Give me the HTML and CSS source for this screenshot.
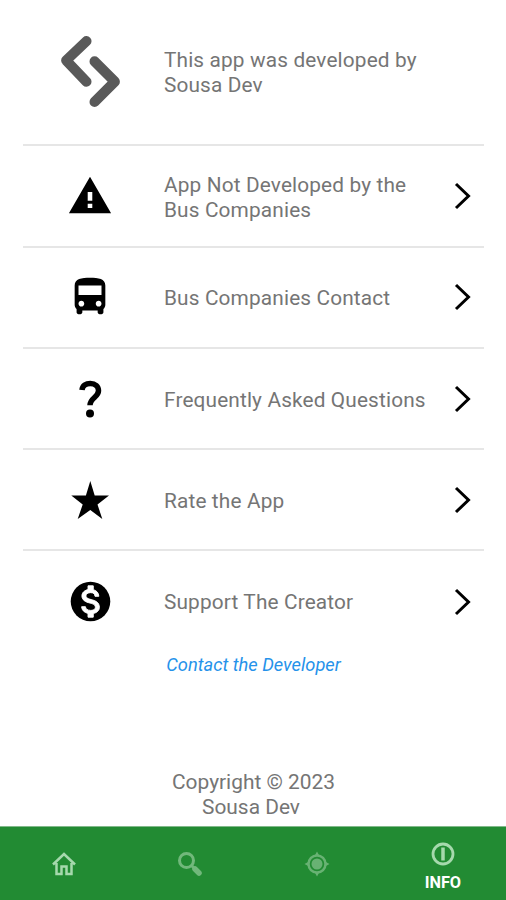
FILE: index.html
```html
<!DOCTYPE html>
<html lang="en">
<head>
<meta charset="utf-8">
<title>Info</title>
<link rel="stylesheet" href="styles.css">
</head>
<body>
<main class="content">
  <section class="row intro">
    <svg class="logo" viewBox="0 0 64 76"><path d="M29 10 9 29 29 50M37 30l20 20-20 20"/></svg>
    <p class="label">This app was developed by<br>Sousa Dev</p>
  </section>
  <a class="row">
    <svg class="icon" viewBox="0 0 24 24"><path d="M1 21h22L12 2 1 21zm12.200-2.700h-2.400v-2.300h2.400v2.300zm0-3.800h-2.400v-4.600h2.400v4.600z"/></svg>
    <p class="label">App Not Developed by the<br>Bus Companies</p>
    <svg class="chevron" viewBox="0 0 18 30"><path d="M2 3 14.500 15 2 27"/></svg>
  </a>
  <a class="row">
    <svg class="icon" viewBox="0 0 24 24"><path d="M4 16c0 .88.39 1.67 1 2.22V20c0 .55.45 1 1 1h1c.55 0 1-.45 1-1v-1h8v1c0 .55.45 1 1 1h1c.55 0 1-.45 1-1v-1.780c.61-.55 1-1.340 1-2.220V6c0-3.500-3.580-4-8-4s-8 .5-8 4v10zm3.500 1c-.83 0-1.500-.67-1.500-1.500S6.670 14 7.500 14s1.500.67 1.500 1.500S8.330 17 7.500 17zm9 0c-.83 0-1.500-.67-1.500-1.500s.67-1.500 1.500-1.500 1.500.67 1.500 1.500-.67 1.500-1.500 1.500zm1.500-6H6V6h12v5z"/></svg>
    <p class="label">Bus Companies Contact</p>
    <svg class="chevron" viewBox="0 0 18 30"><path d="M2 3 14.500 15 2 27"/></svg>
  </a>
  <a class="row">
    <svg class="icon question" viewBox="0 0 46 46"><path d="M15 14C15.500 9.500 19 7.500 23.300 7.500c5 0 8.200 3 8.200 7.300 0 6.500-8.500 7-8.500 14.500"/><circle cx="23" cy="37.500" r="4"/></svg>
    <p class="label">Frequently Asked Questions</p>
    <svg class="chevron" viewBox="0 0 18 30"><path d="M2 3 14.500 15 2 27"/></svg>
  </a>
  <a class="row">
    <svg class="icon" viewBox="0 0 46 46"><path d="M23.300 4 27.700 18.500H42L30.500 27.500 35.300 42 23.300 33 10.700 42 15.700 27.500 4.300 18.500H18.900z"/></svg>
    <p class="label">Rate the App</p>
    <svg class="chevron" viewBox="0 0 18 30"><path d="M2 3 14.500 15 2 27"/></svg>
  </a>
  <a class="row last">
    <svg class="icon coin" viewBox="0 0 24 24"><circle cx="12" cy="12" r="10.100"/><path class="dollar" d="M13.410 18.090V20h-2.670v-1.930c-1.710-.36-3.160-1.460-3.270-3.400h1.960c.1 1.050.82 1.870 2.650 1.870 1.960 0 2.400-.98 2.400-1.590 0-.83-.44-1.610-2.670-2.140-2.480-.6-4.180-1.620-4.180-3.670 0-1.720 1.390-2.840 3.110-3.210V4h2.670v1.950c1.860.45 2.790 1.860 2.850 3.390H14.300c-.05-1.110-.64-1.870-2.220-1.870-1.500 0-2.400.68-2.400 1.640 0 .84.65 1.390 2.670 1.910s4.180 1.390 4.180 3.910c-.01 1.830-1.380 2.830-3.120 3.160z"/></svg>
    <p class="label">Support The Creator</p>
    <svg class="chevron" viewBox="0 0 18 30"><path d="M2 3 14.500 15 2 27"/></svg>
  </a>
  <a class="contact">Contact the Developer</a>
  <footer class="copyright">Copyright © 2023<br><span class="owner">Sousa Dev</span></footer>
</main>
<nav class="tabs">
  <a class="tab"><svg class="tab-icon home" viewBox="0 0 26 26"><path d="M2 13.500 13 3l11 10.500M5.500 12v11h5v-7.500h5V23h5V12"/></svg></a>
  <a class="tab"><svg class="tab-icon search" viewBox="0 0 26 26"><circle cx="9.500" cy="9.500" r="7"/><path class="thin" d="m14 14 3 3"/><path class="handle" d="m18 18 4 4"/></svg></a>
  <a class="tab"><svg class="tab-icon target" viewBox="0 0 26 26"><circle cx="13" cy="13" r="8.500"/><circle class="solid" cx="13" cy="13" r="5.500"/><path class="solid" d="M13 .5 15.500 5h-5zM13 25.500 10.500 21h5zM.5 13 5 10.500v5zM25.500 13 21 15.500v-5z"/></svg></a>
  <a class="tab active"><svg class="tab-icon info" viewBox="0 0 26 26"><circle cx="13" cy="13" r="10"/><path d="M13 6.500v13"/></svg><span>INFO</span></a>
</nav>
</body>
</html>
```
FILE: styles.css
```css
* { box-sizing: border-box; }
body {
  margin: 0;
  height: 900px;
  display: flex;
  flex-direction: column;
  background: #fff;
  font-family: Roboto, "Liberation Sans", sans-serif;
  overflow: hidden;
}
.content { flex: 1; padding: 0 22px 0 23px; }
.row {
  display: grid;
  grid-template-columns: 134px 1fr 18px;
  align-items: center;
  height: 101.250px;
  padding: 0 12px 0 0;
  column-gap: 7px;
  border-bottom: 2px solid #e6e6e6;
}
.row.last { border-bottom: 0; height: 100.250px; }
.intro { height: 146.400px; }
.label {
  margin: 0;
  padding-top: 3px;
  color: #757575;
  font-size: 20.800px;
  font-weight: 400;
  line-height: 25px;
  letter-spacing: 0.150px;
  white-space: nowrap;
}
.intro .label { padding-top: 1px; }
.last .label { padding-top: 2px; }
.logo { width: 65px; height: 77px; justify-self: center; margin: 0 2px 6px 0; }
.logo path {
  fill: none;
  stroke: #595959;
  stroke-width: 10;
  stroke-linecap: round;
  stroke-linejoin: round;
}
.icon { width: 46px; height: 46px; justify-self: center; }
.coin { width: 47px; height: 47px; }
.dollar { fill: #fff; stroke: #fff; stroke-width: 0.500; }
.question path { fill: none; stroke: #000; stroke-width: 5.500; }
.chevron { width: 18px; height: 30px; }
.chevron path { fill: none; stroke: #000; stroke-width: 3; }
.contact {
  display: block;
  margin-top: 2px;
  text-align: center;
  color: #2592ea;
  font-size: 18.300px;
  font-style: italic;
  line-height: 22px;
}
.copyright {
  margin-top: 94px;
  text-align: center;
  color: #757575;
  font-size: 20.900px;
  line-height: 25px;
}
.owner { margin-right: 5px; }
.tabs {
  display: grid;
  grid-template-columns: repeat(4, 1fr);
  height: 74px;
  padding-left: 1px;
  background: #228b33;
  border-top: 1px solid #82b98a;
}
.tab {
  display: flex;
  flex-direction: column;
  align-items: center;
  justify-content: center;
  color: #fff;
  font-size: 16.300px;
  font-weight: 700;
  line-height: 19px;
}
.active { padding-top: 5px; }
.tab-icon {
  width: 26px;
  height: 26px;
  fill: none;
  stroke: #a6d9ad;
  stroke-width: 2.500;
}
.search { stroke: #71b87b; stroke-width: 3; }
.search .handle { stroke-width: 5.500; stroke-linecap: round; }
.target { stroke: #68b273; stroke-width: 2.500; }
.target .solid { fill: #68b273; stroke: none; }
.info { stroke-width: 2.800; margin-bottom: 6px; }
.info path { stroke-width: 3.500; }
```
